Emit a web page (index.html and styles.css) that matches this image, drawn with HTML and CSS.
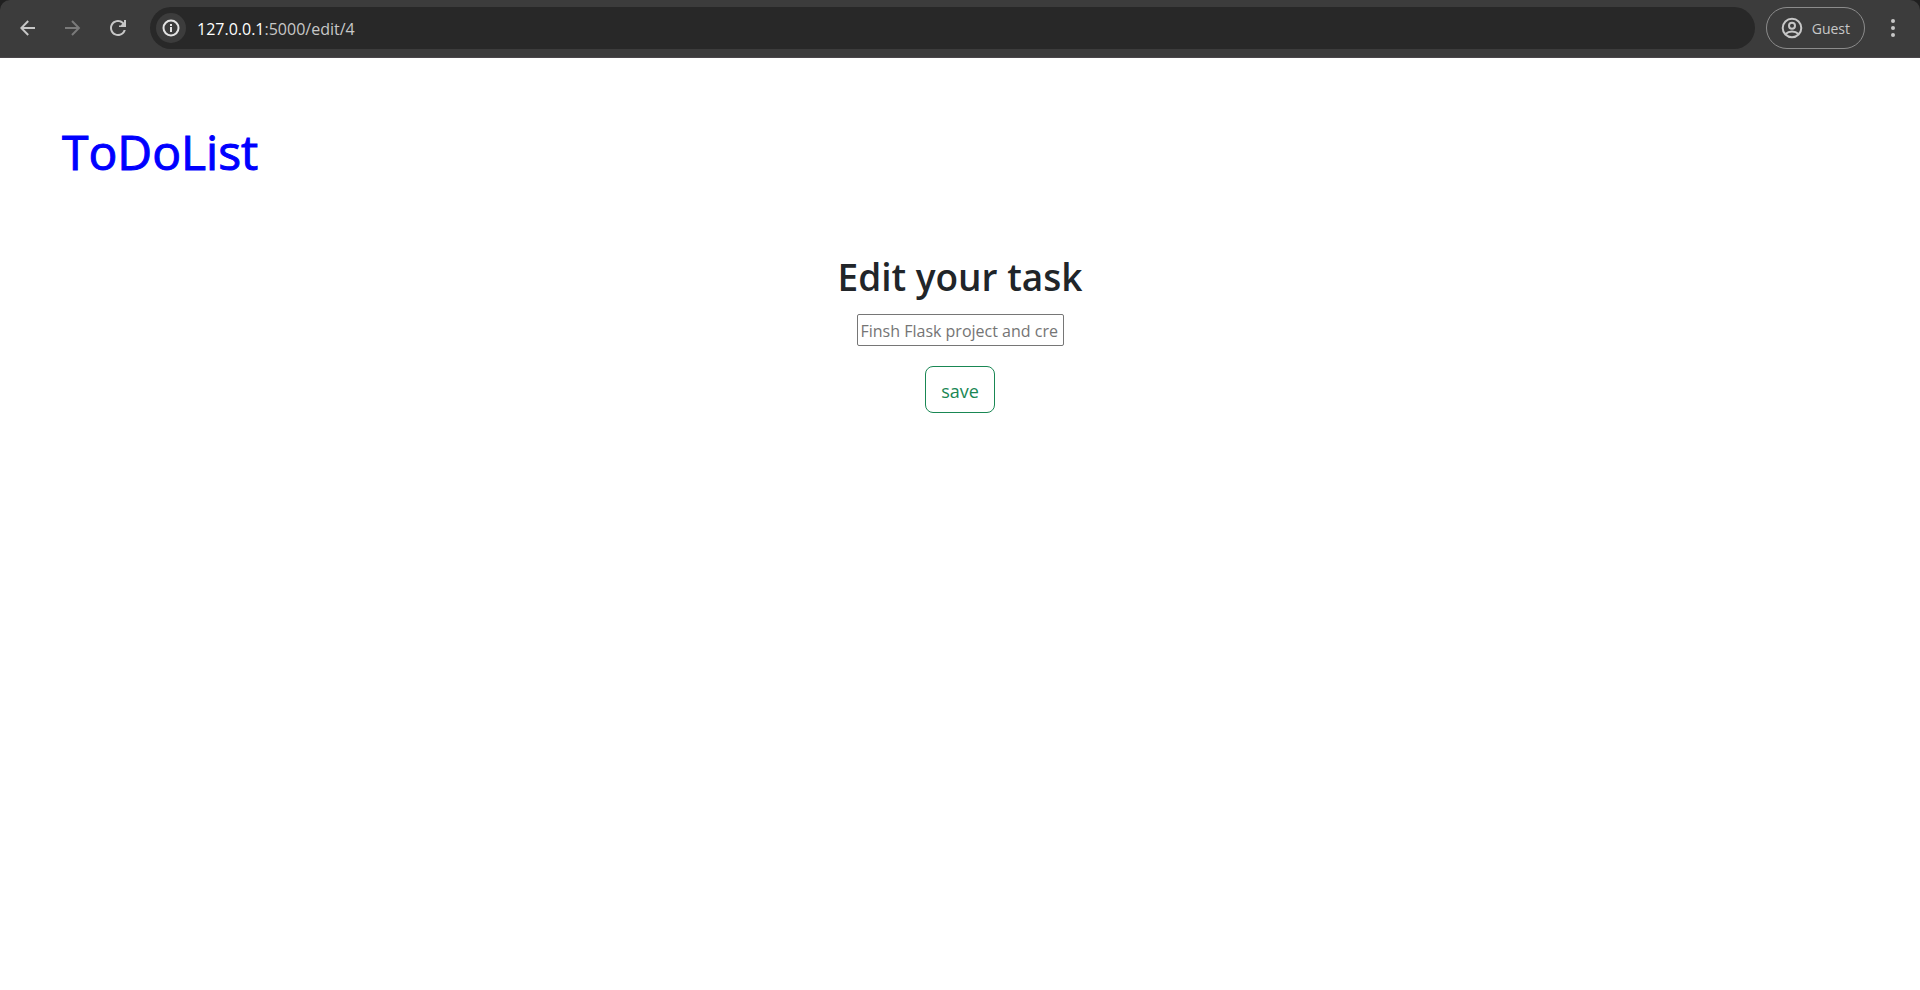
FILE: index.html
```html
<!DOCTYPE html>
<html lang="en">
<head>
<meta charset="utf-8">
<title>ToDoList</title>
<link rel="stylesheet" href="styles.css">
</head>
<body>
<header class="browser">
  <div class="toolbar">
    <nav class="nav">
      <button class="icon-button" type="button" aria-label="Back">
        <svg width="16" height="16" viewBox="0 0 16 16" fill="none" stroke="currentColor" stroke-width="2"><path d="M15 8H1.500M8.200 1 1.300 8l6.900 7"/></svg>
      </button>
      <button class="icon-button" type="button" aria-label="Forward" disabled>
        <svg width="16" height="16" viewBox="0 0 16 16" fill="none" stroke="currentColor" stroke-width="2"><path d="M0 8H13.500M7 1 13.900 8l-6.900 7"/></svg>
      </button>
      <button class="icon-button" type="button" aria-label="Reload">
        <svg width="16" height="16" viewBox="4 4 16 16" fill="currentColor"><path d="M17.650 6.350A7.960 7.960 0 0 0 12 4C7.580 4 4 7.580 4 12S7.580 20 12 20c3.730 0 6.840-2.550 7.730-6h-2.080A6 6 0 0 1 12 18c-3.310 0-6-2.690-6-6s2.690-6 6-6c1.660 0 3.140.690 4.220 1.780L14.600 9.400H13V11h7V4h-2v2.700z"/></svg>
      </button>
    </nav>
    <div class="address">
      <button class="site-info" type="button" aria-label="View site information">
        <svg width="18" height="18" viewBox="0 0 18 18" fill="none" stroke="currentColor" stroke-width="2"><circle cx="9" cy="9" r="7.500"/><path d="M9 8v5M9 5v2"/></svg>
      </button>
      <span class="url"><span class="host">127.0.0.1</span>:5000/edit/4</span>
    </div>
    <button class="profile" type="button">
      <svg width="22" height="22" viewBox="0 0 22 22" fill="none" stroke="currentColor" stroke-width="2"><circle cx="11" cy="11" r="9.300"/><circle cx="11" cy="8.700" r="3"/><path d="M4.500 17c3.500-3.400 9.500-3.400 13 0"/></svg>
      Guest
    </button>
    <button class="menu" type="button" aria-label="Menu">
      <svg width="4" height="18" viewBox="0 0 4 18" fill="currentColor"><circle cx="2" cy="2" r="2"/><circle cx="2" cy="9" r="2"/><circle cx="2" cy="16" r="2"/></svg>
    </button>
  </div>
</header>
<main class="page">
  <h1 class="brand">ToDoList</h1>
  <form class="edit-form">
    <h2 class="form-title"><label for="task">Edit your task</label></h2>
    <input class="task-input" id="task" type="text" placeholder="Finsh Flask project and cre">
    <button class="save" type="submit">save</button>
  </form>
</main>
</body>
</html>
```
FILE: styles.css
```css
* {
  box-sizing: border-box;
}

body {
  margin: 0;
  background: #fff;
  color: #212529;
  font-family: "Open Sans", "Noto Sans", sans-serif;
}

button {
  font-family: inherit;
}

svg {
  display: block;
  flex: none;
}

.browser {
  background: #202020;
}

.toolbar {
  display: flex;
  align-items: center;
  height: 58px;
  padding: 0 11px 1px 12px;
  border-bottom: 1px solid #4a464a;
  border-radius: 10px 10px 0 0;
  background: #3c3c3c;
  color: #c7c7c7;
}

.nav {
  display: flex;
  gap: 13px;
  margin-right: 16px;
}

.icon-button,
.menu {
  display: flex;
  align-items: center;
  justify-content: center;
  width: 32px;
  height: 32px;
  padding: 0;
  border: 0;
  background: none;
  color: inherit;
}

.icon-button:disabled {
  color: #7a7a7a;
}

.address {
  display: flex;
  flex: 1;
  align-items: center;
  gap: 11px;
  height: 42px;
  margin-right: 11px;
  padding: 0 6px;
  border-radius: 21px;
  background: #282828;
}

.site-info {
  display: flex;
  align-items: center;
  justify-content: center;
  width: 30px;
  height: 30px;
  padding: 0;
  border: 0;
  border-radius: 50%;
  background: #3c3c3c;
  color: #e3e3e3;
}

.url {
  padding-top: 1px;
  color: #c7c7c7;
  font-size: 16px;
}

.host {
  color: #fff;
}

.profile {
  display: flex;
  align-items: center;
  gap: 9px;
  height: 42px;
  margin-right: 12px;
  padding: 0 14px;
  border: 1px solid #8c8c8c;
  border-radius: 21px;
  background: none;
  color: #c7c7c7;
  font-size: 14px;
}

.page {
  padding: 64px 62px;
}

.brand {
  margin: 0;
  color: #00f;
  font-size: 48px;
  font-weight: 500;
  line-height: 60px;
  -webkit-text-stroke: 1px #00f;
}

.edit-form {
  display: flex;
  flex-direction: column;
  align-items: center;
  margin-top: 71px;
}

.form-title {
  margin: 0 0 13px;
  font-size: 37px;
  font-weight: 600;
  line-height: 48px;
}

.task-input {
  width: 207px;
  height: 32px;
  padding: 2px 3px 1px;
  border: 1px solid #767676;
  border-radius: 2px;
  font-family: inherit;
  font-size: 16px;
}

.task-input::placeholder {
  color: #757575;
}

.save {
  height: 47px;
  margin-top: 20px;
  padding: 2px 15px 0;
  border: 1px solid #198754;
  border-radius: 8px;
  background: #fff;
  color: #198754;
  font-size: 18px;
}
```
